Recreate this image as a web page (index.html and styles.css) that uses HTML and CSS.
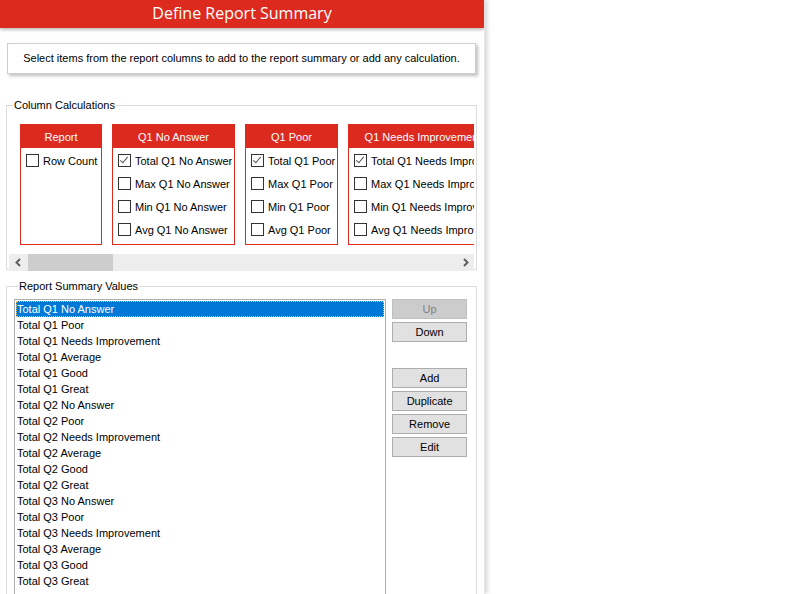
FILE: index.html
```html
<!DOCTYPE html>
<html lang="en">

<head>
    <meta charset="UTF-8">
    <meta name="viewport" content="width=device-width, initial-scale=1.0">
    <title>Define Report Summary</title>
    <link rel="stylesheet" href="styles.css">
</head>

<body>
    <div class="dialog">
        <div class="title-bar">Define Report Summary</div>

        <div class="dialog-body">
            <div class="hint">Select items from the report columns to add to the report summary or add any calculation.</div>

            <fieldset class="group calc-group">
                <legend>Column Calculations</legend>
                <div class="cards-viewport">
                    <div class="cards">
                        <div class="card card-report">
                            <div class="card-head">Report</div>
                            <label class="check"><span class="box"></span>Row Count</label>
                        </div>
                        <div class="card card-noanswer">
                            <div class="card-head">Q1 No Answer</div>
                            <label class="check"><span class="box checked"></span>Total Q1 No Answer</label>
                            <label class="check"><span class="box"></span>Max Q1 No Answer</label>
                            <label class="check"><span class="box"></span>Min Q1 No Answer</label>
                            <label class="check"><span class="box"></span>Avg Q1 No Answer</label>
                        </div>
                        <div class="card card-poor">
                            <div class="card-head">Q1 Poor</div>
                            <label class="check"><span class="box checked"></span>Total Q1 Poor</label>
                            <label class="check"><span class="box"></span>Max Q1 Poor</label>
                            <label class="check"><span class="box"></span>Min Q1 Poor</label>
                            <label class="check"><span class="box"></span>Avg Q1 Poor</label>
                        </div>
                        <div class="card card-needs">
                            <div class="card-head">Q1 Needs Improvement</div>
                            <label class="check"><span class="box checked"></span>Total Q1 Needs Improvement</label>
                            <label class="check"><span class="box"></span>Max Q1 Needs Improvement</label>
                            <label class="check"><span class="box"></span>Min Q1 Needs Improvement</label>
                            <label class="check"><span class="box"></span>Avg Q1 Needs Improvement</label>
                        </div>
                    </div>
                </div>
                <div class="hscroll">
                    <span class="arrow">
                        <svg width="8" height="9" viewBox="0 0 8 9"><path d="M6 1 L2.5 4.5 L6 8" fill="none" stroke="#606060" stroke-width="2"/></svg>
                    </span>
                    <div class="track"><div class="thumb"></div></div>
                    <span class="arrow">
                        <svg width="8" height="9" viewBox="0 0 8 9"><path d="M2 1 L5.5 4.5 L2 8" fill="none" stroke="#606060" stroke-width="2"/></svg>
                    </span>
                </div>
            </fieldset>

            <fieldset class="group summary-group">
                <legend>Report Summary Values</legend>
                <div class="summary-body">
                    <ul class="listbox">
                        <li class="selected">Total Q1 No Answer</li>
                        <li>Total Q1 Poor</li>
                        <li>Total Q1 Needs Improvement</li>
                        <li>Total Q1 Average</li>
                        <li>Total Q1 Good</li>
                        <li>Total Q1 Great</li>
                        <li>Total Q2 No Answer</li>
                        <li>Total Q2 Poor</li>
                        <li>Total Q2 Needs Improvement</li>
                        <li>Total Q2 Average</li>
                        <li>Total Q2 Good</li>
                        <li>Total Q2 Great</li>
                        <li>Total Q3 No Answer</li>
                        <li>Total Q3 Poor</li>
                        <li>Total Q3 Needs Improvement</li>
                        <li>Total Q3 Average</li>
                        <li>Total Q3 Good</li>
                        <li>Total Q3 Great</li>
                    </ul>
                    <div class="buttons">
                        <button class="btn" disabled>Up</button>
                        <button class="btn">Down</button>
                        <button class="btn btn-gap">Add</button>
                        <button class="btn">Duplicate</button>
                        <button class="btn">Remove</button>
                        <button class="btn">Edit</button>
                    </div>
                </div>
            </fieldset>
        </div>
    </div>
</body>

</html>
```

FILE: styles.css
```css
html,
body {
    margin: 0;
    padding: 0;
    height: 100%;
    overflow: hidden;
    background-color: #fff;
}

body {
    font-family: 'Liberation Sans', Arial, sans-serif;
    font-size: 11px;
    color: #000;
}

.dialog {
    width: 484px;
    height: 594px;
    background-color: #fff;
    box-shadow: 2px 0 5px rgba(0, 0, 0, 0.18);
    border-right: 1px solid #e6e6e6;
    overflow: hidden;
}

.title-bar {
    height: 28px;
    line-height: 27px;
    background-color: #dc2a1f;
    color: #fff;
    text-align: center;
    font-family: 'Open Sans', sans-serif;
    font-size: 16px;
    box-shadow: 0 2px 3px rgba(0, 0, 0, 0.25);
}

.dialog-body {
    padding: 15px 7px 0 6px;
}

.hint {
    margin-left: 1px;
    width: 467px;
    height: 29px;
    line-height: 29px;
    border: 1px solid #cfcfcf;
    text-align: center;
    box-shadow: 2px 2px 3px rgba(0, 0, 0, 0.25);
    white-space: nowrap;
}

.group {
    margin: 0;
    border: 1px solid #dcdcdc;
    padding: 0;
    min-width: 0;
    box-sizing: border-box;
}

.group legend {
    padding: 0 1px;
    margin-left: 4px;
    font-size: 11px;
    line-height: 13px;
}

.calc-group {
    margin-top: 25px;
    height: 171px;
    padding: 12px 2px 0 2px;
}

.cards-viewport {
    overflow: hidden;
    height: 123px;
}

.cards {
    display: flex;
    gap: 10px;
    padding-left: 11px;
}

.card {
    flex: none;
    border: 1px solid #dc2a1f;
    box-sizing: border-box;
    height: 121px;
}

.card-report { width: 82px; }
.card-noanswer { width: 123px; }
.card-poor { width: 93px; }
.card-needs { width: 150px; white-space: nowrap; }

.card-head {
    height: 23px;
    line-height: 25px;
    background-color: #dc2a1f;
    color: #fff;
    text-align: center;
    border-bottom: 1px solid #fff;
    white-space: nowrap;
    overflow: hidden;
}

.check {
    display: flex;
    align-items: center;
    height: 23px;
    padding-left: 5px;
    white-space: nowrap;
}

.box {
    flex: none;
    width: 11px;
    height: 11px;
    border: 1px solid #333;
    margin-right: 4px;
    position: relative;
}

.box.checked::after {
    content: '';
    position: absolute;
    left: 3px;
    top: 0;
    width: 3px;
    height: 7px;
    border: solid #555;
    border-width: 0 1px 1px 0;
    transform: rotate(40deg);
}

.hscroll {
    display: flex;
    align-items: center;
    height: 17px;
    margin-top: 7px;
    background-color: #ededed;
}

.hscroll .arrow {
    width: 17px;
    display: flex;
    justify-content: center;
}

.hscroll .track {
    flex: 1;
    height: 17px;
}

.thumb {
    width: 85px;
    height: 17px;
    background-color: #cdcdcd;
    margin-left: 2px;
}

.summary-group {
    margin-top: 10px;
    height: 340px;
    padding: 6px 9px 0 7px;
}

.summary-body {
    display: flex;
    align-items: flex-start;
    gap: 6px;
}

.listbox {
    list-style: none;
    margin: 0;
    padding: 1px;
    width: 369px;
    height: 320px;
    border: 1px solid #abadb3;
    border-bottom: none;
    overflow: hidden;
}

.listbox li {
    height: 16px;
    line-height: 16px;
    padding-left: 1px;
    white-space: nowrap;
}

.listbox li.selected {
    background-color: #0078d7;
    color: #fff;
    outline: 1px dotted #f4c05a;
    outline-offset: -1px;
}

.buttons {
    display: flex;
    flex-direction: column;
    gap: 3px;
    width: 75px;
}

.btn {
    height: 20px;
    padding: 0;
    font-family: 'Liberation Sans', Arial, sans-serif;
    font-size: 11px;
    color: #000;
    background-color: #e1e1e1;
    border: 1px solid #adadad;
}

.btn:disabled {
    background-color: #cccccc;
    border-color: #bfbfbf;
    color: #838383;
}

.btn-gap {
    margin-top: 23px;
}
```
